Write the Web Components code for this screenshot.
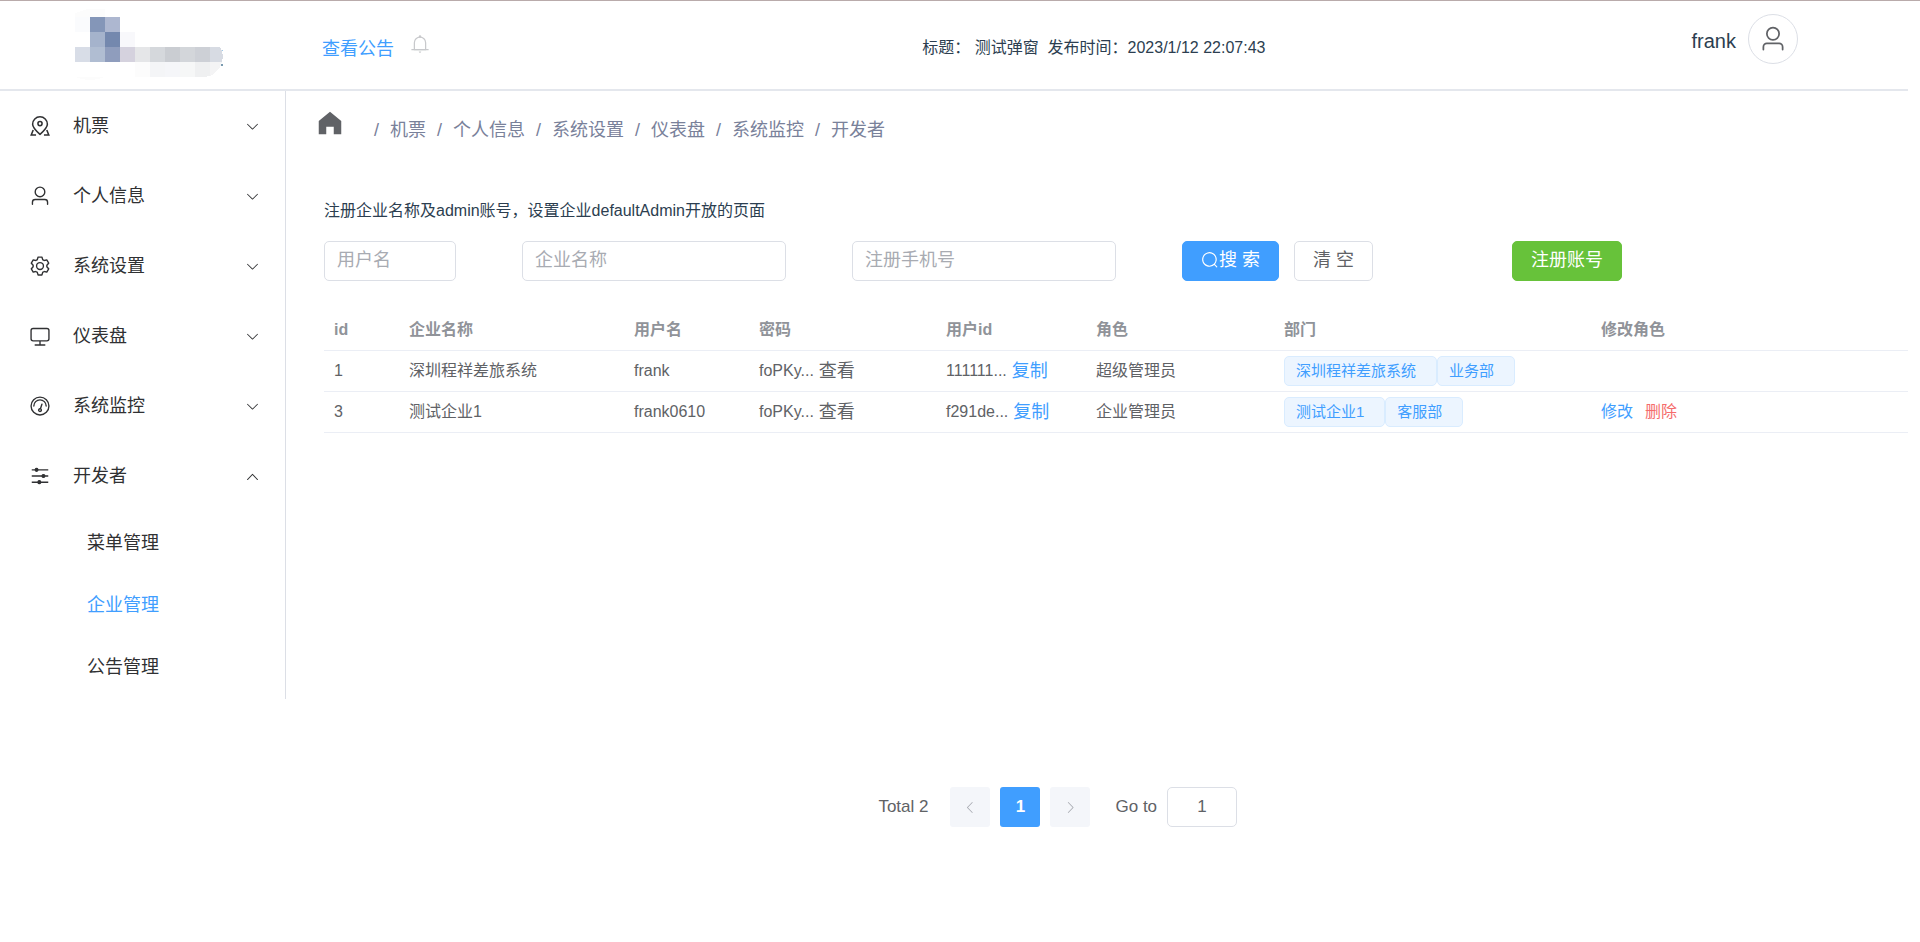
<!DOCTYPE html>
<html lang="zh-CN">
<head>
<meta charset="utf-8">
<title>企业管理</title>
<style>
  body {
    margin: 0;
    background: #fff;
    color: #2c3e50;
    font: 16px/20px "Liberation Sans", "Noto Sans CJK SC", sans-serif;
    --blue: #409eff;
    --green: #67c23a;
    --red: #f56c6c;
    --line: #dcdfe6;
    --row-line: #ebeef5;
    --text: #606266;
    --dark: #303133;
    --muted: #909399;
  }
</style>
</head>
<body>
<admin-app></admin-app>

<template id="t-app">
  <style>
    :host { display: block; border-top: 1px solid #b9abab; }
    .page { margin-right: 12px; }
    .body { display: flex; align-items: flex-start; }
    main { flex: 1; min-width: 0; }
    .content { padding: 61px 0 0 38px; }
    .note { height: 20px; margin: 0 0 20px; }
    company-table { min-height: 477px; margin-top: 29px; }
    page-nav { margin-left: 35%; }
  </style>
  <div class="page">
    <admin-header></admin-header>
    <div class="body">
      <side-nav></side-nav>
      <main>
        <bread-crumb></bread-crumb>
        <div class="content">
          <p class="note">注册企业名称及admin账号，设置企业defaultAdmin开放的页面</p>
          <search-bar></search-bar>
          <company-table></company-table>
          <page-nav></page-nav>
        </div>
      </main>
    </div>
  </div>
</template>

<template id="t-header">
  <style>
    :host { display: grid; grid-template-columns: 322px 600fr 769fr auto; align-items: center; box-sizing: border-box; height: 90px; padding-right: 110px; border-bottom: 2px solid #e4e7ed; }
    .logo { display: block; margin-left: 75px; }
    .notice { display: flex; align-items: center; gap: 16px; padding-top: 8px; }
    a { color: var(--blue); font-size: 18px; line-height: 24px; text-decoration: none; }
    .bell { padding-bottom: 10px; color: #c8c9cc; }
    .title { margin: 0; padding-top: 6px; white-space: pre-wrap; }
    .user { display: flex; align-items: center; gap: 12px; padding-bottom: 12px; }
    .name { padding-top: 4px; font-size: 20px; line-height: 24px; }
    button { display: flex; align-items: center; justify-content: center; width: 50px; height: 50px; padding: 0; border: 1px solid var(--line); border-radius: 50%; background: #fff; color: var(--text); }
  </style>
  <svg class="logo" width="150" height="72" viewBox="0 0 150 72" role="img" aria-label="logo" shape-rendering="crispEdges">
    <path d="M0 8V4L12 0H30V8z" fill="#fcfcfc"/><path d="M0 8h15v15H0z" fill="#fafbfd"/>
    <path d="M15 8h15v15H15z" fill="#8496b8"/><path d="M30 8h15v15H30z" fill="#adb7d0"/>
    <path d="M15 23h15v15H15z" fill="#a5b3cc"/><path d="M30 23h15v15H30z" fill="#7488ae"/><path d="M45 23h15v15H45z" fill="#f8f8fb"/>
    <path d="M0 38h15v15H0z" fill="#d8dde7"/><path d="M15 38h15v15H15z" fill="#b0bdd2"/><path d="M30 38h15v15H30z" fill="#8f9dbd"/>
    <path d="M45 38h15v15H45z" fill="#d5d2de"/><path d="M60 38h15v15H60z" fill="#e5e6e8"/><path d="M75 38h15v15H75z" fill="#d5d8dc"/>
    <path d="M90 38h15v15H90z" fill="#cacdd2"/><path d="M105 38h15v15H105z" fill="#d3d6da"/><path d="M120 38h15v15H120z" fill="#cdd0d6"/>
    <path d="M135 38h10q3 5 3 10l-1 5h-12z" fill="#d7dbe3"/>
    <path d="M60 53h15v15H60z" fill="#fcfcfc"/><path d="M75 53h15v15H75z" fill="#f4f5f7"/><path d="M90 53h15v15H90z" fill="#f5f6f9"/>
    <path d="M105 53h15v15H105z" fill="#f6f7f7"/><path d="M120 53h15v14l-7 1h-8z" fill="#eff0f1"/><path d="M135 53h12q-3 10-12 14z" fill="#f4f4f5"/>
    <path d="M0 68h30q-15 6-30 0z" fill="#fcfcfc"/><path d="M146 55h2v2h-2z" fill="#7a9bb0"/><path d="M147 41h1v1h-1z" fill="#9cc8e8"/>
  </svg>
  <div class="notice"><a href="#notice">查看公告</a><app-icon class="bell" name="bell" size="20"></app-icon></div>
  <p class="title">标题： 测试弹窗  发布时间：2023/1/12 22:07:43</p>
  <div class="user"><span class="name">frank</span><button type="button" aria-label="账号"><app-icon name="user" size="28"></app-icon></button></div>
</template>

<template id="t-side">
  <style>
    :host { display: block; flex: none; box-sizing: border-box; width: 286px; padding-bottom: 1px; border-right: 1px solid var(--line); }
  </style>
  <nav aria-label="菜单">
    <nav-group icon="map">机票</nav-group>
    <nav-group icon="user">个人信息</nav-group>
    <nav-group icon="setting">系统设置</nav-group>
    <nav-group icon="monitor">仪表盘</nav-group>
    <nav-group icon="odometer">系统监控</nav-group>
    <nav-group icon="operation" open>开发者
      <nav-item slot="items">菜单管理</nav-item>
      <nav-item slot="items" active>企业管理</nav-item>
      <nav-item slot="items">公告管理</nav-item>
    </nav-group>
  </nav>
</template>

<template id="t-group">
  <style>
    :host { display: block; }
    button { display: flex; align-items: center; width: 100%; height: 70px; padding: 0 25px; border: 0; background: none; color: var(--dark); font: inherit; font-size: 18px; line-height: 24px; text-align: left; }
    .icon { width: 30px; margin-right: 18px; }
    .label { flex: 1; }
    :host([open]) .items { padding-top: 1px; }
  </style>
  <button type="button"><app-icon class="icon" size="22"></app-icon><span class="label"><slot></slot></span><app-icon class="arrow" size="15"></app-icon></button>
  <div class="items"><slot name="items"></slot></div>
</template>

<template id="t-item">
  <style>
    :host { display: block; }
    a { display: flex; align-items: center; height: 62px; padding-left: 87px; color: var(--dark); font-size: 18px; line-height: 24px; text-decoration: none; }
    :host([active]) a { color: var(--blue); }
  </style>
  <a href="#page"><slot></slot></a>
</template>

<template id="t-crumb">
  <style>
    :host { display: block; padding: 15px 0 0 29px; color: #79819a; font-size: 18px; line-height: 20px; }
    nav { display: flex; align-items: center; gap: 18px; }
    ol { display: flex; margin: 0; padding: 14px 0 0; list-style: none; }
    li { display: flex; height: 20px; }
    li::before { content: "/"; width: 27px; text-align: center; }
    a { color: inherit; text-decoration: none; }
    .home { display: flex; color: var(--text); }
  </style>
  <nav aria-label="路径">
    <a class="home" href="#home" aria-label="首页"><app-icon name="home" size="30"></app-icon></a>
    <ol>
      <li><a href="#1">机票</a></li>
      <li><a href="#2">个人信息</a></li>
      <li><a href="#3">系统设置</a></li>
      <li><a href="#4">仪表盘</a></li>
      <li><a href="#5">系统监控</a></li>
      <li><a href="#6">开发者</a></li>
    </ol>
  </nav>
</template>

<template id="t-search">
  <style>
    :host { display: block; }
    form { display: grid; grid-template-columns: repeat(24, minmax(0, 1fr)); }
    input { box-sizing: border-box; width: 100%; height: 40px; padding: 0 12px 2px; border: 1px solid var(--line); border-radius: 5px; color: var(--text); font: inherit; font-size: 18px; }
    input::placeholder { color: #a8abb2; opacity: 1; }
    .name { grid-column: 1 / span 2; }
    .company { grid-column: 4 / span 4; }
    .phone { grid-column: 9 / span 4; }
    .actions { grid-column: 14 / span 4; display: flex; gap: 15px; }
    .register { grid-column: 19 / span 4; }
    button { display: inline-flex; align-items: center; height: 40px; padding: 0 18px 2px; border: 1px solid var(--line); border-radius: 5px; background: #fff; color: var(--text); font: inherit; font-size: 18px; white-space: nowrap; }
    .primary { border-color: var(--blue); background: var(--blue); color: #fff; }
    .success { border-color: var(--green); background: var(--green); color: #fff; }
  </style>
  <form>
    <input class="name" aria-label="用户名" placeholder="用户名">
    <input class="company" aria-label="企业名称" placeholder="企业名称">
    <input class="phone" aria-label="注册手机号" placeholder="注册手机号">
    <div class="actions">
      <button class="primary" type="button"><app-icon name="search" size="18"></app-icon>搜 索</button>
      <button type="button">清 空</button>
    </div>
    <div class="register"><button class="success" type="button">注册账号</button></div>
  </form>
</template>

<template id="t-table">
  <style>
    :host { display: block; }
    table { width: 100%; border-collapse: separate; border-spacing: 0; table-layout: fixed; color: var(--text); }
    th, td { box-sizing: border-box; height: 41px; padding: 0 10px; border-bottom: 1px solid var(--row-line); text-align: left; white-space: nowrap; }
    th { color: var(--muted); font-weight: bold; }
    .cell { display: flex; align-items: center; gap: 5px; }
    button { padding: 0; border: 0; background: none; color: inherit; font: inherit; font-size: 18px; line-height: 24px; }
    .copy { color: var(--blue); }
    .ops { gap: 12px; }
    .ops button { font-size: 16px; }
    .danger { color: var(--red); }
    .tags { display: flex; }
  </style>
  <table>
    <colgroup>
      <col style="width:75px"><col style="width:225px"><col style="width:125px"><col style="width:187px"><col style="width:150px"><col style="width:188px"><col><col>
    </colgroup>
    <thead>
      <tr><th>id</th><th>企业名称</th><th>用户名</th><th>密码</th><th>用户id</th><th>角色</th><th>部门</th><th>修改角色</th></tr>
    </thead>
    <tbody>
      <tr>
        <td>1</td><td>深圳程祥差旅系统</td><td>frank</td>
        <td><div class="cell">foPKy... <button type="button">查看</button></div></td>
        <td><div class="cell">111111... <button class="copy" type="button">复制</button></div></td>
        <td>超级管理员</td>
        <td><div class="tags"><dept-tag>深圳程祥差旅系统</dept-tag><dept-tag>业务部</dept-tag></div></td>
        <td></td>
      </tr>
      <tr>
        <td>3</td><td>测试企业1</td><td>frank0610</td>
        <td><div class="cell">foPKy... <button type="button">查看</button></div></td>
        <td><div class="cell">f291de... <button class="copy" type="button">复制</button></div></td>
        <td>企业管理员</td>
        <td><div class="tags"><dept-tag>测试企业1</dept-tag><dept-tag>客服部</dept-tag></div></td>
        <td><div class="cell ops"><button class="copy" type="button">修改</button><button class="danger" type="button">删除</button></div></td>
      </tr>
    </tbody>
  </table>
</template>

<template id="t-tag">
  <style>
    :host { display: inline-flex; align-items: center; box-sizing: border-box; height: 30px; padding: 0 20px 0 11px; border: 1px solid #d9ecff; border-radius: 5px; background: #ecf5ff; color: var(--blue); font-size: 15px; line-height: 20px; }
  </style>
  <slot></slot>
</template>

<template id="t-pages">
  <style>
    :host { display: flex; align-items: center; color: var(--text); font-size: 17px; line-height: 20px; }
    .total { margin-right: 22px; }
    .pages { display: flex; gap: 10px; margin-right: 25px; }
    button { display: flex; align-items: center; justify-content: center; width: 40px; height: 40px; padding: 0; border: 0; border-radius: 3px; background: #f4f6fa; color: #a8abb2; font: inherit; }
    .current { background: var(--blue); color: #fff; font-weight: bold; }
    label { display: flex; align-items: center; gap: 10px; }
    input { box-sizing: border-box; width: 70px; height: 40px; padding: 0; border: 1px solid var(--line); border-radius: 5px; color: var(--text); font: inherit; text-align: center; }
  </style>
  <span class="total">Total 2</span>
  <div class="pages">
    <button type="button" aria-label="上一页" disabled><app-icon name="left" size="15"></app-icon></button>
    <button type="button" class="current">1</button>
    <button type="button" aria-label="下一页" disabled><app-icon name="right" size="15"></app-icon></button>
  </div>
  <label>Go to <input value="1"></label>
</template>

<script>
  const ICONS = {
    down: '<path d="M831.872 340.864 512 652.672 192.128 340.864a30.592 30.592 0 0 0-42.752 0 29.12 29.12 0 0 0 0 41.6L489.664 714.24a32 32 0 0 0 44.672 0l340.288-331.712a29.12 29.12 0 0 0 0-41.728 30.592 30.592 0 0 0-42.752 0z"/>',
    up: '<path d="m488.832 344.32-339.84 356.672a32 32 0 0 0 0 44.16l.384.384a29.44 29.44 0 0 0 42.688 0l320-335.872 319.872 335.872a29.44 29.44 0 0 0 42.688 0l.384-.384a32 32 0 0 0 0-44.16L535.168 344.32a32 32 0 0 0-46.336 0z"/>',
    left: '<path d="M609.408 149.376 277.76 489.6a32 32 0 0 0 0 44.672l331.648 340.352a29.12 29.12 0 0 0 41.728 0 30.592 30.592 0 0 0 0-42.752L339.264 511.936l311.872-319.872a30.592 30.592 0 0 0 0-42.688 29.12 29.12 0 0 0-41.728 0z"/>',
    right: '<path d="M340.864 149.312a30.592 30.592 0 0 0 0 42.752L652.736 512 340.864 831.872a30.592 30.592 0 0 0 0 42.752 29.12 29.12 0 0 0 41.728 0L714.24 534.336a32 32 0 0 0 0-44.672L382.592 149.376a29.12 29.12 0 0 0-41.728 0z"/>',
    user: '<path d="M512 512a192 192 0 1 0 0-384 192 192 0 0 0 0 384zm0 64a256 256 0 1 1 0-512 256 256 0 0 1 0 512zm320 320v-96a96 96 0 0 0-96-96H288a96 96 0 0 0-96 96v96a32 32 0 1 1-64 0v-96a160 160 0 0 1 160-160h448a160 160 0 0 1 160 160v96a32 32 0 1 1-64 0z"/>',
    monitor: '<path d="M544 768v128h192a32 32 0 1 1 0 64H288a32 32 0 1 1 0-64h192V768H192A128 128 0 0 1 64 640V256a128 128 0 0 1 128-128h640a128 128 0 0 1 128 128v384a128 128 0 0 1-128 128H544zM192 192a64 64 0 0 0-64 64v384a64 64 0 0 0 64 64h640a64 64 0 0 0 64-64V256a64 64 0 0 0-64-64H192z"/>',
    setting: '<path d="M600.704 64a32 32 0 0 1 30.464 22.208l35.2 109.376c14.784 7.232 28.928 15.36 42.432 24.512l112.384-24.192a32 32 0 0 1 34.432 15.36L944.32 364.8a32 32 0 0 1-4.032 37.504l-77.12 85.12a357.12 357.12 0 0 1 0 49.024l77.12 85.248a32 32 0 0 1 4.032 37.504l-88.704 153.6a32 32 0 0 1-34.432 15.296L708.8 803.904c-13.44 9.088-27.648 17.28-42.368 24.512l-35.264 109.376A32 32 0 0 1 600.704 960H423.296a32 32 0 0 1-30.464-22.208L357.696 828.48a351.616 351.616 0 0 1-42.56-24.64l-112.32 24.256a32 32 0 0 1-34.432-15.36L79.68 659.2a32 32 0 0 1 4.032-37.504l77.12-85.248a357.12 357.12 0 0 1 0-48.896l-77.12-85.248A32 32 0 0 1 79.68 364.8l88.704-153.6a32 32 0 0 1 34.432-15.296l112.32 24.256c13.568-9.152 27.776-17.408 42.56-24.64l35.2-109.312A32 32 0 0 1 423.232 64H600.64zm-23.424 64H446.72l-36.352 113.088-24.512 11.968a294.113 294.113 0 0 0-34.816 20.096l-22.656 15.36-116.224-25.088-65.28 113.152 79.68 88.192-1.92 27.136a293.12 293.12 0 0 0 0 40.192l1.92 27.136-79.808 88.192 65.344 113.152 116.224-25.024 22.656 15.296a294.113 294.113 0 0 0 34.816 20.096l24.512 11.968L446.72 896h130.688l36.48-113.152 24.448-11.904a288.282 288.282 0 0 0 34.752-20.096l22.592-15.296 116.288 25.024 65.28-113.152-79.744-88.192 1.92-27.136a293.12 293.12 0 0 0 0-40.256l-1.92-27.136 79.808-88.128-65.344-113.152-116.288 24.96-22.592-15.232a287.616 287.616 0 0 0-34.752-20.096l-24.448-11.904L577.344 128zM512 320a192 192 0 1 1 0 384 192 192 0 0 1 0-384zm0 64a128 128 0 1 0 0 256 128 128 0 0 0 0-256z"/>',
    operation: '<path d="M389.44 768a96.064 96.064 0 0 1 181.12 0H896v64H570.56a96.064 96.064 0 0 1-181.12 0H128v-64h261.44zm192-288a96.064 96.064 0 0 1 181.12 0H896v64H762.56a96.064 96.064 0 0 1-181.12 0H128v-64h453.44zm-320-288a96.064 96.064 0 0 1 181.12 0H896v64H442.56a96.064 96.064 0 0 1-181.12 0H128v-64h133.44z"/>',
    odometer: '<circle cx="512" cy="512" r="416" fill="none" stroke="currentColor" stroke-width="64"/><path d="M192 512a320 320 0 1 1 640 0 32 32 0 1 1-64 0 256 256 0 1 0-512 0 32 32 0 0 1-64 0zM570.432 627.84A96 96 0 1 1 509.568 608l60.992-187.776A32 32 0 1 1 631.424 440l-60.992 187.776zM502.08 734.464a32 32 0 1 0 19.84-60.928 32 32 0 0 0-19.84 60.928z"/>',
    map: '<g fill="none" stroke="currentColor" stroke-width="72"><path d="M512 900C284 700 168 570 168 430a344 344 0 0 1 688 0c0 140-116 270-344 470z"/><circle cx="512" cy="400" r="96"/><path d="M196 700 104 928h224M828 700l92 228H696"/></g>',
    bell: '<path d="M512 64a64 64 0 0 1 64 64v64H448v-64a64 64 0 0 1 64-64z"/><path d="M256 768h512V448a256 256 0 1 0-512 0v320zm256-640a320 320 0 0 1 320 320v384H192V448a320 320 0 0 1 320-320z"/><path d="M96 768h832q32 0 32 32t-32 32H96q-32 0-32-32t32-32zm352 128h128a64 64 0 0 1-128 0z"/>',
    home: '<path d="M512 128 128 447.936V896h255.936V640H640v256h255.936V447.936z"/>',
    search: '<path d="m795.904 750.72 124.992 124.928a32 32 0 0 1-45.248 45.248L750.656 795.904a416 416 0 1 1 45.248-45.248zM480 832a352 352 0 1 0 0-704 352 352 0 0 0 0 704z"/>'
  };

  class Base extends HTMLElement {
    constructor() {
      super();
      this.attachShadow({ mode: 'open' });
      const t = document.getElementById(this.constructor.template);
      if (t) this.shadowRoot.append(document.importNode(t.content, true));
    }
  }

  class AppIcon extends Base {
    static observedAttributes = ['name', 'size'];
    attributeChangedCallback() {
      const size = this.getAttribute('size');
      this.shadowRoot.innerHTML =
        '<style>:host{display:inline-flex;align-items:center;justify-content:center;flex:none}svg{display:block}</style>' +
        `<svg width="${size}" height="${size}" viewBox="0 0 1024 1024" fill="currentColor" aria-hidden="true">${ICONS[this.getAttribute('name')] || ''}</svg>`;
    }
  }

  class NavGroup extends Base {
    static template = 't-group';
    connectedCallback() {
      const open = this.hasAttribute('open');
      this.shadowRoot.querySelector('.icon').setAttribute('name', this.getAttribute('icon'));
      this.shadowRoot.querySelector('.arrow').setAttribute('name', open ? 'up' : 'down');
      this.shadowRoot.querySelector('button').setAttribute('aria-expanded', open);
    }
  }

  customElements.define('app-icon', AppIcon);
  customElements.define('nav-group', NavGroup);
  const simple = {
    'nav-item': 't-item', 'dept-tag': 't-tag', 'admin-header': 't-header', 'side-nav': 't-side',
    'bread-crumb': 't-crumb', 'search-bar': 't-search', 'company-table': 't-table',
    'page-nav': 't-pages', 'admin-app': 't-app'
  };
  for (const [tag, template] of Object.entries(simple)) {
    customElements.define(tag, class extends Base { static template = template; });
  }
</script>
</body>
</html>
